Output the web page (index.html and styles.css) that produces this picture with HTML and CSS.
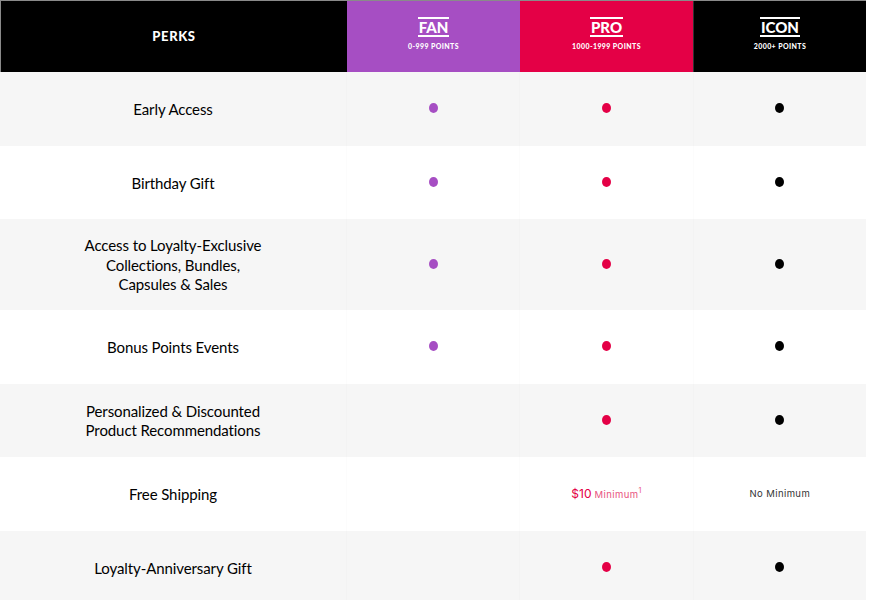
FILE: index.html
```html
<!DOCTYPE html>
<html>
<head>
<meta charset="utf-8">
<link rel="stylesheet" href="styles.css">
</head>
<body>
<div class="table">
  <div class="row head">
    <div class="cell perk-head">PERKS</div>
    <div class="cell tier fan"><span class="tier-name">FAN</span><span class="tier-pts">0-999 POINTS</span></div>
    <div class="cell tier pro"><span class="tier-name">PRO</span><span class="tier-pts">1000-1999 POINTS</span></div>
    <div class="cell tier icon"><span class="tier-name">ICON</span><span class="tier-pts">2000+ POINTS</span></div>
  </div>
  <div class="row gray">
    <div class="cell perk">Early Access</div>
    <div class="cell"><span class="dot d-fan"></span></div>
    <div class="cell"><span class="dot d-pro"></span></div>
    <div class="cell"><span class="dot d-icon"></span></div>
  </div>
  <div class="row">
    <div class="cell perk">Birthday Gift</div>
    <div class="cell"><span class="dot d-fan"></span></div>
    <div class="cell"><span class="dot d-pro"></span></div>
    <div class="cell"><span class="dot d-icon"></span></div>
  </div>
  <div class="row gray tall">
    <div class="cell perk">Access to Loyalty-Exclusive<br>Collections, Bundles,<br>Capsules &amp; Sales</div>
    <div class="cell"><span class="dot d-fan"></span></div>
    <div class="cell"><span class="dot d-pro"></span></div>
    <div class="cell"><span class="dot d-icon"></span></div>
  </div>
  <div class="row">
    <div class="cell perk">Bonus Points Events</div>
    <div class="cell"><span class="dot d-fan"></span></div>
    <div class="cell"><span class="dot d-pro"></span></div>
    <div class="cell"><span class="dot d-icon"></span></div>
  </div>
  <div class="row gray">
    <div class="cell perk">Personalized &amp; Discounted<br>Product Recommendations</div>
    <div class="cell"></div>
    <div class="cell"><span class="dot d-pro"></span></div>
    <div class="cell"><span class="dot d-icon"></span></div>
  </div>
  <div class="row">
    <div class="cell perk">Free Shipping</div>
    <div class="cell"></div>
    <div class="cell"><span class="ship pro-ship"><span class="amt">$10</span> Minimum<sup>1</sup></span></div>
    <div class="cell"><span class="ship">No Minimum</span></div>
  </div>
  <div class="row gray">
    <div class="cell perk">Loyalty-Anniversary Gift</div>
    <div class="cell"></div>
    <div class="cell"><span class="dot d-pro"></span></div>
    <div class="cell"><span class="dot d-icon"></span></div>
  </div>
</div>
</body>
</html>
```
FILE: styles.css
```css
* { box-sizing: border-box; }
body {
  margin: 0;
  background: #fff;
  font-family: "Lato", "Noto Sans", sans-serif;
  color: #000;
}
.table {
  width: 866px;
}
.row {
  display: grid;
  grid-template-columns: 346px 1fr 1fr 1fr;
  height: 73.5px;
}
.row.gray { background: #f6f6f6; }
.row.tall { height: 91px; }
.row.head {
  height: 72px;
  border-top: 1px solid #8a8a8a;
  border-left: 1px solid #8a8a8a;
}
.cell {
  display: flex;
  align-items: center;
  justify-content: center;
  text-align: center;
}
.row:not(.head) .cell + .cell { border-left: 1px solid rgba(0,0,0,0.012); }
.perk {
  font-size: 15px;
  line-height: 19.5px;
  padding-top: 2px;
  letter-spacing: -0.1px;
}
.perk-head {
  background: #000;
  color: #fff;
  font-weight: 900;
  font-size: 13px;
  letter-spacing: 0.6px;
  padding-bottom: 2px;
}
.tier {
  flex-direction: column;
  color: #fff;
}
.fan { background: #a64ec3; }
.pro { background: #e40046; }
.icon { background: #000; border-left: 1px solid #333; }
.tier-name {
  font-weight: 900;
  font-size: 15px;
  line-height: 16px;
  border-top: 2px solid #fff;
  border-bottom: 2px solid #fff;
  padding: 0 1px;
  margin-top: -6px;
}
.tier-pts {
  font-weight: 900;
  font-size: 7px;
  letter-spacing: 0.4px;
  margin-top: 5px;
}
.dot {
  width: 9px;
  height: 10px;
  border-radius: 50%;
  display: block;
  margin-top: -1px;
}
.d-fan { background: #a64ec3; }
.d-pro { background: #e40046; }
.d-icon { background: #000; }
.ship {
  font-family: "Inter", "Liberation Sans", sans-serif;
  font-size: 9.5px;
  letter-spacing: 0.4px;
  color: #333;
}
.pro-ship { color: #e8537e; }
.amt { font-size: 12px; color: #e40046; letter-spacing: 0; }
sup { font-size: 7px; vertical-align: 5px; line-height: 0; }
```
